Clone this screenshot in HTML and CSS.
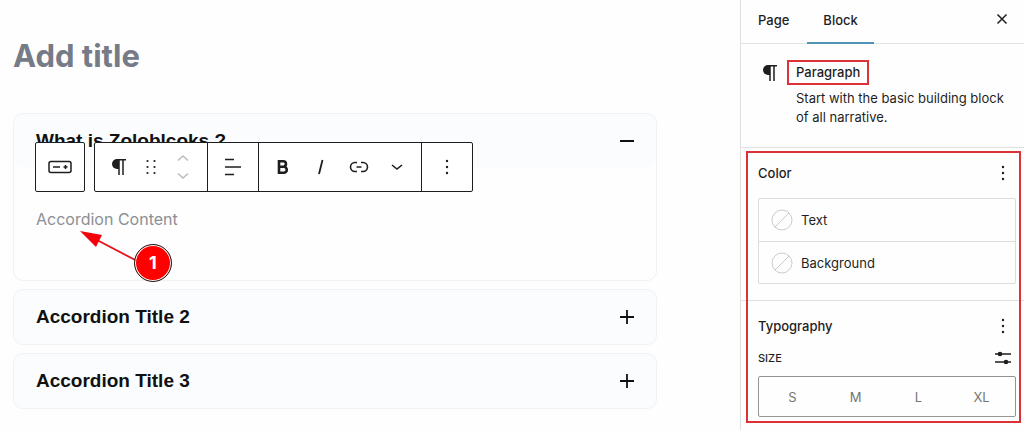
FILE: index.html
```html
<!DOCTYPE html>
<html lang="en">
<head>
  <meta charset="UTF-8">
  <meta name="viewport" content="width=device-width, initial-scale=1.0">
  <title>Edit Page</title>
  <link rel="stylesheet" href="styles.css">
</head>
<body>
  <div class="layout">
    <main class="editor">
      <h1 class="page-title">Add title</h1>

      <div class="accordion">
        <section class="item">
          <button class="item-head" aria-expanded="true">
            <span>What is Zoloblcoks ?</span>
            <svg width="14" height="14" viewBox="0 0 14 14"><path d="M0 7h14" stroke="#111" stroke-width="2"/></svg>
          </button>
          <div class="item-body">
            <p>Accordion Content</p>
          </div>

          <div class="toolbar">
            <div class="tool-box">
              <button class="tool parent" aria-label="Select parent block">
                <svg width="26" height="16" viewBox="0 0 26 16" fill="none" stroke="#1e1e1e" stroke-width="1.500"><rect x="2" y="2.500" width="22" height="11" rx="2"/><path d="M6 8h7M16.500 8h4M18.500 6v4"/></svg>
              </button>
            </div>
            <div class="tool-box">
              <div class="tool-group moving">
                <button class="tool" aria-label="Paragraph">
                  <svg width="16" height="18" viewBox="0 0 16 18"><path d="M8 1v10H6A5 5 0 0 1 6 1z" fill="#1e1e1e"/><path d="M6 1.700h9M8 1v16M12 1v16" stroke="#1e1e1e" stroke-width="1.500"/></svg>
                </button>
                <button class="tool" aria-label="Drag">
                  <svg width="12" height="18" viewBox="0 0 12 18" fill="#1e1e1e"><circle cx="2.500" cy="3" r="1.100"/><circle cx="9.500" cy="3" r="1.100"/><circle cx="2.500" cy="9" r="1.100"/><circle cx="9.500" cy="9" r="1.100"/><circle cx="2.500" cy="15" r="1.100"/><circle cx="9.500" cy="15" r="1.100"/></svg>
                </button>
                <button class="tool" aria-label="Move up or down">
                  <svg width="14" height="26" viewBox="0 0 14 26" fill="none" stroke="#bbb" stroke-width="1.500"><path d="M2 6.500l5-4.500 5 4.500M2 19.500l5 4.500 5-4.500"/></svg>
                </button>
              </div>
              <div class="tool-group">
                <button class="tool" aria-label="Align text">
                  <svg width="18" height="18" viewBox="0 0 18 18" stroke="#1e1e1e" stroke-width="1.500"><path d="M1 1.500h9M1 9h16M1 16.500h9"/></svg>
                </button>
              </div>
              <div class="tool-group format">
                <button class="tool" aria-label="Bold">
                  <svg width="14" height="16" viewBox="0 0 14 16" fill="none" stroke="#1e1e1e" stroke-width="2.600"><path d="M3 2.200h4.200a2.700 2.700 0 0 1 0 5.500H3h4.800a3 3 0 0 1 0 6H3zM3 1v13.900"/></svg>
                </button>
                <button class="tool" aria-label="Italic">
                  <svg width="10" height="16" viewBox="0 0 10 16" stroke="#1e1e1e" stroke-width="1.800"><path d="M6.500 1L3 15"/></svg>
                </button>
                <button class="tool" aria-label="Link">
                  <svg width="20" height="14" viewBox="0 0 20 14" fill="none" stroke="#1e1e1e" stroke-width="1.600"><path d="M8 2.500H6a4.500 4.500 0 0 0 0 9h2M12 2.500h2a4.500 4.500 0 0 1 0 9h-2M7.500 7h5"/></svg>
                </button>
                <button class="tool" aria-label="More">
                  <svg width="12" height="8" viewBox="0 0 12 8" fill="none" stroke="#1e1e1e" stroke-width="1.600"><path d="M1 2l5 4 5-4"/></svg>
                </button>
              </div>
              <div class="tool-group">
                <button class="tool" aria-label="Options">
                  <svg width="4" height="16" viewBox="0 0 4 16" fill="#1e1e1e"><circle cx="2" cy="2" r="1.200"/><circle cx="2" cy="8" r="1.200"/><circle cx="2" cy="14" r="1.200"/></svg>
                </button>
              </div>
            </div>
          </div>

          <svg class="pointer" width="96" height="56" viewBox="0 0 96 56">
            <path d="M18 10L60 32" stroke="#e8101a" stroke-width="1.800"/>
            <path d="M1 1l22 4-6 12z" fill="#f5000a"/>
          </svg>
          <span class="step">1</span>
        </section>

        <section class="item">
          <button class="item-head" aria-expanded="false">
            <span>Accordion Title 2</span>
            <svg width="14" height="14" viewBox="0 0 14 14"><path d="M0 7h14M7 0v14" stroke="#111" stroke-width="1.800"/></svg>
          </button>
        </section>

        <section class="item">
          <button class="item-head" aria-expanded="false">
            <span>Accordion Title 3</span>
            <svg width="14" height="14" viewBox="0 0 14 14"><path d="M0 7h14M7 0v14" stroke="#111" stroke-width="1.800"/></svg>
          </button>
        </section>
      </div>
    </main>

    <aside class="sidebar">
      <div class="tabs">
        <button class="tab">Page</button>
        <button class="tab active">Block</button>
        <button class="icon-btn close" aria-label="Close settings">
          <svg width="12" height="12" viewBox="0 0 12 12" stroke="#1e1e1e" stroke-width="1.500"><path d="M1.500 1.500l9 9M10.500 1.500l-9 9"/></svg>
        </button>
      </div>

      <div class="block-card">
        <svg width="16" height="18" viewBox="0 0 16 18"><path d="M8 1v10H6A5 5 0 0 1 6 1z" fill="#1e1e1e"/><path d="M6 1.700h9M8 1v16M12 1v16" stroke="#1e1e1e" stroke-width="1.500"/></svg>
        <div>
          <h2 class="block-name">Paragraph</h2>
          <p class="block-text">Start with the basic building block of all narrative.</p>
        </div>
      </div>

      <div class="panels">
        <section class="panel">
          <div class="panel-head">
            <h2>Color</h2>
            <button class="icon-btn" aria-label="Color options">
              <svg width="4" height="16" viewBox="0 0 4 16" fill="#1e1e1e"><circle cx="2" cy="2" r="1.200"/><circle cx="2" cy="8" r="1.200"/><circle cx="2" cy="14" r="1.200"/></svg>
            </button>
          </div>
          <div class="colors">
            <button class="color">
              <svg width="22" height="22" viewBox="0 0 22 22" fill="none" stroke="#ccc"><circle cx="11" cy="11" r="10"/><path d="M4 18L18 4"/></svg>
              Text
            </button>
            <button class="color">
              <svg width="22" height="22" viewBox="0 0 22 22" fill="none" stroke="#ccc"><circle cx="11" cy="11" r="10"/><path d="M4 18L18 4"/></svg>
              Background
            </button>
          </div>
        </section>

        <section class="panel">
          <div class="panel-head">
            <h2>Typography</h2>
            <button class="icon-btn" aria-label="Typography options">
              <svg width="4" height="16" viewBox="0 0 4 16" fill="#1e1e1e"><circle cx="2" cy="2" r="1.200"/><circle cx="2" cy="8" r="1.200"/><circle cx="2" cy="14" r="1.200"/></svg>
            </button>
          </div>
          <div class="size-head">
            <h3 id="sizeLabel">Size</h3>
            <button class="icon-btn" aria-label="Set custom size">
              <svg width="16" height="14" viewBox="0 0 16 14" fill="#1e1e1e"><path d="M0 3h16M0 11h16" stroke="#1e1e1e" stroke-width="1.500"/><circle cx="5" cy="3" r="2.300"/><circle cx="11" cy="11" r="2.300"/></svg>
            </button>
          </div>
          <div class="sizes" role="radiogroup" aria-labelledby="sizeLabel">
            <label><input type="radio" name="size">S</label>
            <label><input type="radio" name="size">M</label>
            <label><input type="radio" name="size">L</label>
            <label><input type="radio" name="size">XL</label>
          </div>
        </section>
      </div>
    </aside>
  </div>
</body>
</html>
```
FILE: styles.css
```css
* {
  box-sizing: border-box;
}
body {
  margin: 0;
  background: #fefefe;
  color: #1e1e1e;
  font-family: Inter, "Liberation Sans", sans-serif;
  font-size: 13px;
}
h1, h2, h3, p {
  margin: 0;
}
button {
  padding: 0;
  border: none;
  background: none;
  color: inherit;
  font: inherit;
  cursor: pointer;
}
svg {
  display: block;
  flex-shrink: 0;
}
.layout {
  display: flex;
  min-height: 100vh;
}

/* editor */
.editor {
  flex: 1;
  padding: 36px 83px 0 13px;
}
.page-title {
  margin-bottom: 37px;
  color: #757b87;
  font-size: 31px;
  font-weight: bold;
  line-height: 40px;
}
.accordion {
  display: flex;
  flex-direction: column;
  gap: 8px;
}
.item {
  position: relative;
  border: 1px solid #eff1f3;
  border-radius: 10px;
}
.item-head {
  display: flex;
  align-items: center;
  justify-content: space-between;
  width: 100%;
  height: 54px;
  padding: 0 22px;
  border-radius: 10px;
  background: #fafcfe;
  color: #111;
  font-family: "Liberation Sans", sans-serif;
  font-size: 19px;
  font-weight: bold;
}
.item-body {
  height: 112px;
  padding: 39px 22px 0;
  color: #8c8f94;
  font-size: 16px;
  line-height: 24px;
}

/* floating block toolbar */
.toolbar {
  position: absolute;
  top: 28px;
  left: 21px;
  display: flex;
  gap: 9px;
}
.tool-box {
  display: flex;
  height: 50px;
  border: 1px solid #1e1e1e;
  border-radius: 2px;
  background: #fff;
}
.tool-group {
  display: flex;
  padding: 0 9px;
}
.tool-group + .tool-group {
  border-left: 1px solid #1e1e1e;
}
.tool {
  display: flex;
  align-items: center;
  justify-content: center;
  width: 32px;
}
.moving {
  padding: 0 8px;
}
.format {
  padding: 0 5px;
}
.format .tool {
  width: 38px;
}
.parent {
  width: 48px;
}

/* step marker */
.pointer {
  position: absolute;
  top: 116px;
  left: 65px;
}
.step {
  position: absolute;
  top: 130px;
  left: 120px;
  width: 38px;
  height: 38px;
  border: 1px solid #222;
  border-radius: 50%;
  background: #f00;
  box-shadow: inset 0 0 0 1px #fff;
  color: #fff;
  font-size: 18px;
  font-weight: bold;
  line-height: 36px;
  text-align: center;
}

/* sidebar */
.sidebar {
  width: 284px;
  border-left: 1px solid #e0e0e0;
}
.tabs {
  display: flex;
  gap: 2px;
  height: 44px;
  padding: 0 9px 0 1px;
  border-bottom: 1px solid #e4e4e4;
}
.tab {
  height: 44px;
  padding: 0 16px 4px;
  font-weight: 500;
}
.tab.active {
  border-bottom: 2px solid #4f94b5;
  padding-bottom: 2px;
}
.icon-btn {
  display: flex;
  align-items: center;
  justify-content: center;
  width: 26px;
  height: 24px;
}
.close {
  margin: 7px 0 0 auto;
}
.block-card {
  display: flex;
  gap: 9px;
  padding: 16px 8px 20px 21px;
  border-bottom: 1px solid #e0e0e0;
}
.block-card > svg {
  margin-top: 4px;
}
.block-name {
  display: inline-block;
  margin-bottom: 4px;
  padding: 0 7px;
  border: 2px solid #dc3237;
  font-size: 13px;
  font-weight: 500;
  line-height: 21px;
}
.block-text {
  padding-left: 9px;
  line-height: 19px;
}
.panels {
  position: relative;
  padding-bottom: 10px;
}
.panels::after {
  content: "";
  position: absolute;
  inset: 3px 3px 4px 5px;
  border: 2px solid #dc3237;
  pointer-events: none;
}
.panel {
  padding: 13px 8px 0 17px;
}
.panel + .panel {
  margin-top: 16px;
  border-top: 1px solid #e0e0e0;
}
.panel-head,
.size-head {
  display: flex;
  align-items: center;
  justify-content: space-between;
}
.panel-head {
  height: 24px;
}
.panel-head h2 {
  font-size: 13px;
  font-weight: 500;
}
.colors {
  margin-top: 13px;
  border: 1px solid #ddd;
  border-radius: 2px;
}
.color {
  display: flex;
  align-items: center;
  gap: 8px;
  width: 100%;
  height: 42px;
  padding: 0 12px;
}
.color + .color {
  border-top: 1px solid #ddd;
}
.size-head {
  height: 24px;
  margin: 8px 0 6px;
}
.size-head h3 {
  font-size: 11px;
  font-weight: 500;
  text-transform: uppercase;
}
.sizes {
  display: flex;
  height: 41px;
  padding: 0 2px;
  border: 1px solid #949494;
  border-radius: 2px;
  color: #757575;
}
.sizes label {
  display: flex;
  flex: 1;
  align-items: center;
  justify-content: center;
  cursor: pointer;
}
.sizes input {
  appearance: none;
  margin: 0;
}
```
